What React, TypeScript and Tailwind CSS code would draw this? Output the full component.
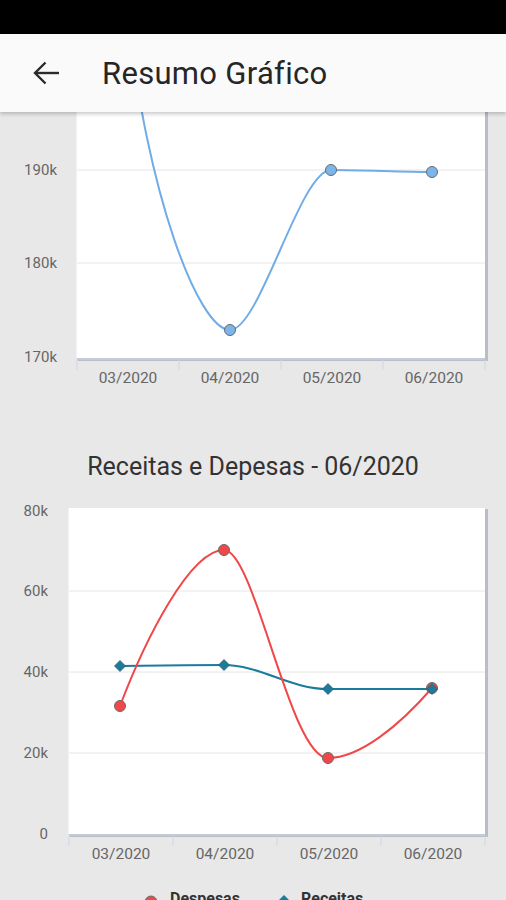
import React from "react";

const GRID = "#e6e6e6";
const LABEL = "#666666";
const TICK = "#ccd6eb";

type Pt = [number, number];

// x-axis category labels with the tick marks between them
const XAxis = ({ left, right, y, labels }: { left: number; right: number; y: number; labels: string[] }) => {
  const step = (right - left) / labels.length;
  return (
    <g>
      {Array.from({ length: labels.length + 1 }).map((_, i) => (
        <line key={i} x1={left + i * step} x2={left + i * step} y1={y + 2} y2={y + 12} stroke={TICK} strokeWidth={1} />
      ))}
      {labels.map((l, i) => (
        <text key={l} x={left + step * (i + 0.5)} y={y + 25} textAnchor="middle" fontSize={15.5} fill={LABEL}>
          {l}
        </text>
      ))}
    </g>
  );
};

const PlotBox = ({ x, y, w, h }: { x: number; y: number; w: number; h: number }) => (
  <g>
    <rect x={x + 1} y={y + 1} width={w + 2} height={h + 2} fill="#b9bdc4" />
    <rect x={x - 1} y={y} width={w + 1} height={h} fill="#f2f2f2" />
    <rect x={x} y={y} width={w} height={h} fill="#ffffff" />
    <line x1={x} x2={x + w} y1={y + h + 1} y2={y + h + 1} stroke="#c3cad8" strokeWidth={2} />
  </g>
);

const Circle = ({ p, fill }: { p: Pt; fill: string }) => (
  <circle cx={p[0]} cy={p[1]} r={5.5} fill={fill} stroke="#6b6b6b" strokeWidth={1} />
);

const Diamond = ({ p, fill }: { p: Pt; fill: string }) => (
  <path
    d={`M${p[0]},${p[1] - 5.5} L${p[0] + 5.5},${p[1]} L${p[0]},${p[1] + 5.5} L${p[0] - 5.5},${p[1]} Z`}
    fill={fill}
    stroke="#3c5b66"
    strokeWidth={0.8}
  />
);

const months = ["03/2020", "04/2020", "05/2020", "06/2020"];

const SaldoChart = () => {
  const pts: Pt[] = [[230, 330], [331, 170], [432, 172]];
  return (
    <svg width={506} height={288} viewBox="0 112 506 288" className="block shrink-0">
      <PlotBox x={77} y={100} w={408} h={258} />
      <line x1={77} x2={485} y1={170} y2={170} stroke={GRID} />
      <line x1={77} x2={485} y1={263} y2={263} stroke={GRID} />
      {[
        ["190k", 175],
        ["180k", 268],
        ["170k", 362],
      ].map(([t, y]) => (
        <text key={t} x={57} y={y as number} textAnchor="end" fontSize={15} fill={LABEL}>
          {t}
        </text>
      ))}
      <path
        d="M128,15 C146,190 198,330 230,330 C260,330 300,170 331,170 C365,170 400,172 432,172"
        fill="none"
        stroke="#70ace6"
        strokeWidth={2}
      />
      {pts.map((p) => (
        <Circle key={p[0]} p={p} fill="#7cb5ec" />
      ))}
      <XAxis left={77} right={485} y={358} labels={months} />
    </svg>
  );
};

const RED = "#f04848";
const TEAL = "#1b7b9c";

const FluxoChart = () => {
  const despesas: Pt[] = [[120, 706], [224, 550], [328, 758], [432, 688]];
  const receitas: Pt[] = [[120, 666], [224, 665], [328, 689], [432, 689]];
  return (
    <svg width={506} height={405} viewBox="0 495 506 405" className="block shrink-0">
      <PlotBox x={69} y={508} w={416} h={326} />
      {[591, 672, 753].map((y) => (
        <line key={y} x1={69} x2={485} y1={y} y2={y} stroke={GRID} />
      ))}
      {[
        ["80k", 516],
        ["60k", 596],
        ["40k", 677],
        ["20k", 758],
        ["0", 839],
      ].map(([t, y]) => (
        <text key={t} x={48} y={y as number} textAnchor="end" fontSize={15} fill={LABEL}>
          {t}
        </text>
      ))}
      <path
        d="M120,666 C150,666 190,665 224,665 C260,665 290,689 328,689 C360,689 400,689 432,689"
        fill="none"
        stroke={TEAL}
        strokeWidth={2}
      />
      <path
        d="M120,706 C145,640 190,550 224,550 C255,550 290,758 328,758 C360,758 400,725 432,688"
        fill="none"
        stroke={RED}
        strokeWidth={2}
      />
      {despesas.map((p) => (
        <Circle key={p[0]} p={p} fill={RED} />
      ))}
      {receitas.map((p) => (
        <Diamond key={p[0]} p={p} fill={TEAL} />
      ))}
      <XAxis left={69} right={485} y={834} labels={months} />

      {/* legend, cut by the bottom edge as on the phone */}
      <g fontSize={16} fontWeight={700} fill="#333333">
        <line x1={139} x2={163} y1={902} y2={902} stroke={RED} strokeWidth={2} />
        <circle cx={151} cy={902} r={6} fill={RED} stroke="#6b6b6b" strokeWidth={1} />
        <text x={170} y={904}>Despesas</text>
        <line x1={272} x2={296} y1={902} y2={902} stroke={TEAL} strokeWidth={2} />
        <path d="M284,895 L291,902 L284,909 L277,902 Z" fill={TEAL} />
        <text x={301} y={904}>Receitas</text>
      </g>
    </svg>
  );
};

export default function App() {
  return (
    <div
      className="w-[506px] h-[900px] overflow-hidden bg-[#e8e8e8] flex flex-col"
      style={{ fontFamily: "Roboto, 'Noto Sans', sans-serif" }}
    >
      <div className="h-[34px] bg-black shrink-0" />
      <header className="relative z-10 h-[78px] shrink-0 bg-[#fafafa] flex items-center shadow-[0_2px_4px_rgba(0,0,0,0.22)]">
        <button className="ml-[32px] w-[28px] h-[24px] flex items-center justify-center text-[#2b2b2b]">
          <svg width="27" height="24" viewBox="0 0 27 24" fill="none" stroke="currentColor" strokeWidth="2.4">
            <path d="M26 12H2.5" />
            <path d="M12.5 1.5L2 12l10.5 10.5" />
          </svg>
        </button>
        <h1 className="ml-[42px] text-[31px] leading-none text-[#262626] font-normal tracking-[0.3px]">Resumo Gráfico</h1>
      </header>
      <main className="flex flex-col">
        <SaldoChart />
        <div className="h-[95px] flex items-end justify-center pb-[14px]">
          <h2 className="text-[25px] leading-[28px] text-[#333333]">Receitas e Depesas - 06/2020</h2>
        </div>
        <FluxoChart />
      </main>
    </div>
  );
}
